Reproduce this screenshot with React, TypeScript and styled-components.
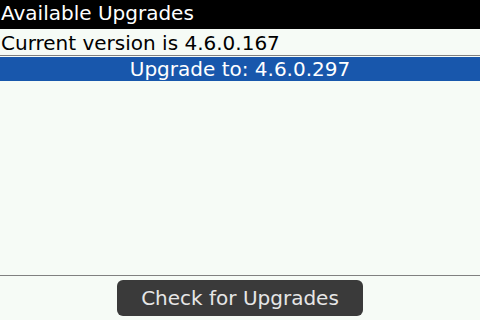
import { FC } from "react";
import styled, { createGlobalStyle } from "styled-components";

const GlobalStyle = createGlobalStyle`
  html, body {
    margin: 0;
    padding: 0;
    background: #f6fbf6;
  }
  body {
    font-family: "DejaVu Sans", "Liberation Sans", sans-serif;
  }
`;

const Screen = styled.div`
  width: 480px;
  height: 320px;
  display: flex;
  flex-direction: column;
  background: #f6fbf6;
  overflow: hidden;
`;

const TitleBar = styled.div`
  height: 29px;
  background: #000;
  color: #fff;
  font-size: 20px;
  line-height: 27px;
  padding-left: 1px;
`;

const InfoRow = styled.div`
  height: 26px;
  color: #000;
  font-size: 20px;
  line-height: 28px;
  padding-left: 1px;
  border-bottom: 1px solid #808080;
`;

const SelectedRow = styled.div`
  margin-top: 1px;
  height: 24px;
  background: #1857ac;
  color: #fff;
  font-size: 20px;
  line-height: 24px;
  text-align: center;
`;

const Body = styled.div`
  flex: 1;
  border-bottom: 1px solid #808080;
`;

const Footer = styled.div`
  height: 44px;
  display: flex;
  justify-content: center;
  padding-top: 4px;
  box-sizing: border-box;
`;

const Button = styled.button`
  width: 246px;
  height: 36px;
  background: #3a3a3a;
  color: #e6e6e6;
  border: none;
  border-radius: 6px;
  font-family: "DejaVu Sans", "Liberation Sans", sans-serif;
  font-size: 20px;
  padding: 0;
`;

const App: FC = () => {
  return (
    <>
      <GlobalStyle />
      <Screen>
        <TitleBar>Available Upgrades</TitleBar>
        <InfoRow>Current version is 4.6.0.167</InfoRow>
        <SelectedRow>Upgrade to: 4.6.0.297</SelectedRow>
        <Body />
        <Footer>
          <Button>Check for Upgrades</Button>
        </Footer>
      </Screen>
    </>
  );
};

export default App;
